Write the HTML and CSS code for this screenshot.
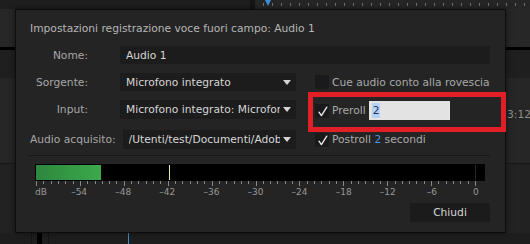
FILE: index.html
```html
<!DOCTYPE html>
<html lang="it">
<head>
    <meta charset="UTF-8">
    <meta name="viewport" content="width=device-width, initial-scale=1.0">
    <title>Impostazioni registrazione voce fuori campo</title>
    <link rel="stylesheet" href="styles.css">
</head>
<body>

    <!-- sfondo dell'applicazione -->
    <div class="app">
        <div class="band band-top">
            <div class="top-left"></div>
            <div class="top-sep"></div>
            <div class="ruler"><span class="playhead"></span></div>
        </div>
        <div class="band band-black"></div>
        <div class="band band-dark"></div>
        <div class="band band-mid">3:12:00</div>
        <div class="band band-low"></div>
        <div class="band band-bottom">
            <span class="vline"></span>
            <span class="vbar"></span>
            <span class="vline vline-2"></span>
            <span class="vline vline-blue"></span>
        </div>
    </div>

    <!-- finestra di dialogo -->
    <div class="dialog">
        <div class="dialog-title">Impostazioni registrazione voce fuori campo: Audio 1</div>

        <div class="row">
            <label class="lbl">Nome:</label>
            <div class="field">Audio 1</div>
        </div>

        <div class="form-grid">
            <div class="row">
                <label class="lbl">Sorgente:</label>
                <div class="field select"><span class="val">Microfono integrato</span><span class="arrow"></span></div>
            </div>
            <div class="opt"><span class="check"></span>Cue audio conto alla rovescia</div>

            <div class="row row-19">
                <label class="lbl">Input:</label>
                <div class="field select"><span class="val">Microfono integrato: Microfono integrato</span><span class="arrow"></span></div>
            </div>
            <div class="opt">
                <span class="check"><svg width="14" height="14" viewBox="0 0 14 14"><path d="M4 8.2 L6.4 11.6 L11.8 3.2" /></svg></span>Preroll<span class="num-input"><span class="sel">2</span></span>
            </div>

            <div class="row row-19">
                <label class="lbl lbl-wide">Audio acquisito:</label>
                <div class="field select"><span class="val">/Utenti/test/Documenti/Adobe</span><span class="arrow"></span></div>
            </div>
            <div class="opt">
                <span class="check"><svg width="14" height="14" viewBox="0 0 14 14"><path d="M4 8.2 L6.4 11.6 L11.8 3.2" /></svg></span>Postroll&nbsp;<span class="blue">2</span>&nbsp;secondi
            </div>
        </div>

        <div class="sep"></div>

        <!-- misuratore livello audio -->
        <div class="meter">
            <div class="meter-fill" style="width: 65px"></div>
            <div class="meter-gap" style="width: 68px"></div>
            <div class="meter-peak"></div>
            <div class="meter-rest"></div>
            <div class="meter-clip-sep"></div>
            <div class="meter-clip"></div>
        </div>
        <div class="scale"></div>
        <div class="scale-labels">
            <span class="first">dB</span>
            <span>–54</span>
            <span>–48</span>
            <span>–42</span>
            <span>–36</span>
            <span>–30</span>
            <span>–24</span>
            <span>–18</span>
            <span>–12</span>
            <span>–6</span>
            <span>0</span>
        </div>

        <div class="btn-row">
            <div class="btn">Chiudi</div>
        </div>
    </div>

    <!-- riquadro rosso di evidenziazione -->
    <div class="highlight"></div>

</body>
</html>
```

FILE: styles.css
```css
/* pagina */
body {
    margin: 0;
    width: 530px;
    height: 244px;
    overflow: hidden;
    position: relative;
    background-color: #232323;
    font-family: "DejaVu Sans", "Liberation Sans", sans-serif;
    font-size: 10.7px;
}

/* sfondo applicazione */
.app {
    display: flex;
    flex-direction: column;
    height: 244px;
}

.band-top {
    height: 47px;
    display: flex;
    background-color: #272727;
}

.top-left {
    width: 250px;
    height: 9px;
    background-color: #1e1e1e;
}

.top-sep {
    width: 5px;
    height: 9px;
    background-color: #151515;
}

.ruler {
    flex: 1;
    height: 9px;
    background:
        repeating-linear-gradient(to right, transparent 0 8px, #707070 8px 9px) 0 3px / 100% 3px no-repeat,
        #262626;
}

.playhead {
    display: block;
    width: 0;
    height: 0;
    margin-left: 10px;
    border-left: 3px solid transparent;
    border-right: 3px solid transparent;
    border-top: 6px solid #3b8fd8;
}

.band-black {
    height: 3px;
    background-color: #000;
}

.band-dark {
    height: 28px;
    background-color: #1f1f1f;
}

.band-mid {
    height: 85px;
    box-sizing: border-box;
    padding: 30px 0 0 507px;
    background-color: #262626;
    color: #8f8f8f;
    white-space: nowrap;
    overflow: hidden;
}

.band-low {
    flex: 1;
    background-color: #222;
    border-top: 1px solid #181818;
}

.band-bottom {
    height: 11px;
    display: flex;
    background-color: #1e1e1e;
}

.vline {
    width: 1px;
    margin-left: 31px;
    background-color: #141414;
}

.vbar {
    width: 5px;
    margin-left: 5px;
    background-color: #000;
}

.vline-2 {
    margin-left: 6px;
}

.vline-blue {
    margin-left: 79px;
    background-color: #3a8bd0;
}

/* finestra di dialogo */
.dialog {
    position: absolute;
    left: 15px;
    top: 9px;
    width: 491px;
    height: 224px;
    box-sizing: border-box;
    padding: 12px 15px 0 14px;
    border: 1px solid #0c0c0c;
    background-color: #242424;
    box-shadow: 0 0 6px rgba(0, 0, 0, 0.5);
}

.dialog-title {
    line-height: 14px;
    color: #b6b6b6;
    margin-bottom: 10px;
}

.row {
    display: flex;
    align-items: center;
    height: 18px;
}

.lbl {
    flex: none;
    width: 58px;
    margin-right: 32px;
    text-align: right;
    color: #a7a7a7;
}

.lbl-wide {
    width: auto;
    margin-right: 7px;
}

.field {
    flex: 1;
    min-width: 0;
    height: 100%;
    display: flex;
    align-items: center;
    padding-left: 6px;
    background-color: #1c1c1c;
    color: #d6d6d6;
    white-space: nowrap;
    overflow: hidden;
}

.select {
    padding-right: 5px;
}

.select .val {
    flex: 1;
    overflow: hidden;
}

.arrow {
    flex: none;
    width: 0;
    height: 0;
    margin-left: 3px;
    border-left: 4px solid transparent;
    border-right: 4px solid transparent;
    border-top: 5px solid #d4d4d4;
}

/* griglia a due colonne */
.form-grid {
    display: grid;
    grid-template-columns: 266px 1fr;
    grid-template-rows: 18px 21px 19px;
    column-gap: 19px;
    row-gap: 9px;
    margin-top: 9px;
}

.form-grid .row {
    align-self: start;
}

.form-grid .row-19 {
    height: 19px;
}

.opt {
    display: flex;
    align-items: center;
    color: #a9a9a9;
    white-space: nowrap;
}

.check {
    flex: none;
    width: 14px;
    height: 14px;
    margin-right: 3px;
    background-color: #1a1a1a;
}

.check svg {
    display: block;
}

.check path {
    fill: none;
    stroke: #e8e8e8;
    stroke-width: 1.4;
    stroke-linecap: round;
    stroke-linejoin: round;
}

.num-input {
    width: 81px;
    height: 19px;
    box-sizing: border-box;
    margin-left: 3px;
    padding-left: 3px;
    display: flex;
    align-items: center;
    background-color: #e3e3e3;
}

.sel {
    padding: 0 1px;
    line-height: 15px;
    background-color: #b4d3f6;
    color: #1c2f55;
}

.blue {
    color: #3f9de2;
}

.sep {
    height: 1px;
    margin: 6px 0 0 -1px;
    background-color: #171717;
}

/* misuratore */
.meter {
    display: flex;
    height: 17px;
    box-sizing: border-box;
    margin: 8px 5px 0 5px;
    padding: 1px;
    background-color: #000;
}

.meter-fill {
    background: linear-gradient(to right, #2d873d, #3ca94c);
}

.meter-peak {
    width: 1px;
    background-color: #efe6a6;
}

.meter-rest {
    flex: 1;
}

.meter-clip-sep {
    width: 1px;
    background-color: #262626;
}

.meter-clip {
    width: 8px;
}

.scale {
    width: 440px;
    height: 6px;
    margin-left: 6px;
    background:
        repeating-linear-gradient(to right, #8a8a8a 0 1px, transparent 1px 43.9px) 0 0 / 100% 5px no-repeat,
        repeating-linear-gradient(to right, #8a8a8a 0 1px, transparent 1px 7.3167px) 0 0 / 100% 3px no-repeat;
}

.scale-labels {
    display: flex;
    justify-content: space-between;
    width: 440px;
    margin-left: 6px;
    font-size: 9px;
    line-height: 11px;
    color: #989898;
}

.scale-labels span {
    flex: 0 0 0;
    min-width: 0;
    display: flex;
    justify-content: center;
    white-space: nowrap;
}

.scale-labels .first {
    justify-content: flex-start;
    margin-left: -1px;
}

.btn-row {
    display: flex;
    justify-content: flex-end;
    margin-top: 5px;
}

.btn {
    width: 80px;
    height: 19px;
    display: flex;
    align-items: center;
    justify-content: center;
    background-color: #1b1b1b;
    color: #d6d6d6;
}

/* evidenziazione */
.highlight {
    position: absolute;
    left: 308px;
    top: 92px;
    width: 198px;
    height: 40px;
    box-sizing: border-box;
    border: 5px solid #e11f27;
}
```
